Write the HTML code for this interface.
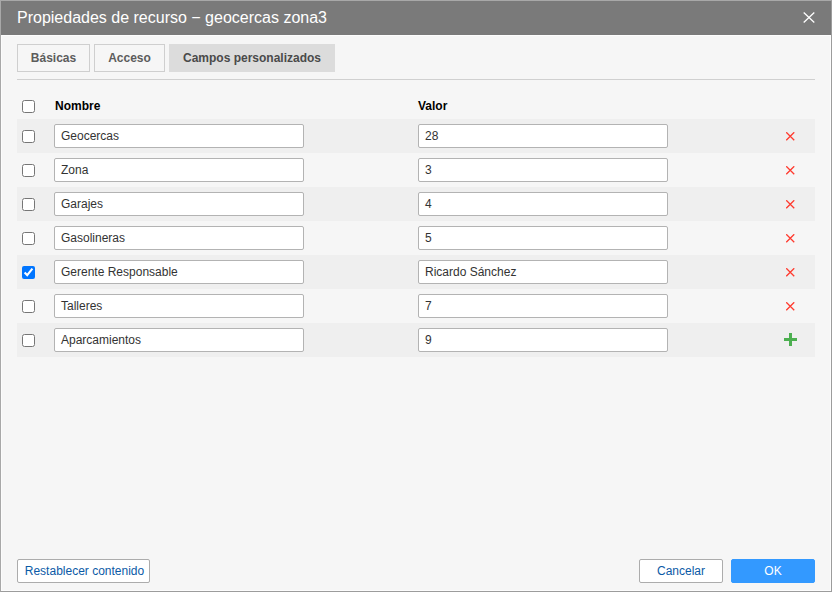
<!DOCTYPE html>
<html><head><meta charset="utf-8">
<style>
*{box-sizing:border-box;margin:0;padding:0}
html,body{width:832px;height:592px;overflow:hidden;background:#f6f6f6}
body{font-family:"Liberation Sans",sans-serif;font-size:12px;color:#333;position:relative}
.a{position:absolute}
#frame{left:0;top:0;width:832px;height:592px;border-top:1px solid #a8a8a8;border-left:1px solid #a8a8a8;border-right:1px solid #9c9c9c;border-bottom:1px solid #9c9c9c}
#hl{left:1px;top:35px;width:830px;height:556px;border:1px solid #fcfcfc;border-top:1px solid #fdfdfd}
#title{left:1px;top:1px;width:830px;height:34px;background:#7a7a7a}
#ttext{left:17px;top:9px;font-size:16px;line-height:18px;color:#fff;white-space:nowrap}
#close{left:803px;top:12px;width:12px;height:11px}
.tab{top:44px;height:28px;border:1px solid #cfcfcf;background:#f6f6f6;font-weight:bold;color:#5c5c5c;text-align:center;line-height:26px;white-space:nowrap}
.tab.act{background:#dcdcdc;border-color:#dcdcdc;color:#4a4a4a}
#sep{left:17px;top:79px;width:798px;height:1px;background:#d0d0d0}
.hd{top:99px;font-weight:bold;color:#000;line-height:14px}
.band{left:17px;width:798px;height:34px;background:#efefef}
.inp{height:24px;width:250px;background:#fff;border:1px solid #b3b3b3;border-radius:2px;padding-left:6px;line-height:22px;white-space:nowrap;color:#333}
.cb{width:13px;height:13px;margin:0}
.x{left:786px;width:9px;height:9px}
.btn{top:559px;height:24px;border:1px solid #acacac;border-radius:2px;background:#fff;color:#0b5aa6;text-align:center;line-height:22px;white-space:nowrap}
.ok{background:#3399ff;border-color:#3399ff;color:#fff}
</style></head><body>
<div id="frame" class="a"></div>
<div id="title" class="a"></div>
<div id="hl" class="a"></div>
<div id="ttext" class="a">Propiedades de recurso − geocercas zona3</div>
<svg id="close" class="a" viewBox="0 0 12 11"><path d="M0.7 0.6L11.3 10.4M11.3 0.6L0.7 10.4" stroke="#fff" stroke-width="1.3"/></svg>

<div class="a tab" style="left:17px;width:73px">Básicas</div>
<div class="a tab" style="left:94px;width:71px">Acceso</div>
<div class="a tab act" style="left:169px;width:166px">Campos personalizados</div>
<div id="sep" class="a"></div>

<input type="checkbox" class="a cb" style="left:22px;top:100px">
<div class="a hd" style="left:55px">Nombre</div>
<div class="a hd" style="left:418px">Valor</div>

<div class="a band" style="top:119px"></div>
<div class="a band" style="top:187px"></div>
<div class="a band" style="top:255px"></div>
<div class="a band" style="top:323px"></div>

<input type="checkbox" class="a cb" style="left:22px;top:130px">
<div class="a inp" style="left:54px;top:124px">Geocercas</div>
<div class="a inp" style="left:418px;top:124px">28</div>
<svg class="a x" style="top:132px" viewBox="0 0 9 9"><path d="M0.25 0.25L8.25 8.25M8.25 0.25L0.25 8.25" stroke="#ff3a2e" stroke-width="1.3"/></svg>

<input type="checkbox" class="a cb" style="left:22px;top:164px">
<div class="a inp" style="left:54px;top:158px">Zona</div>
<div class="a inp" style="left:418px;top:158px">3</div>
<svg class="a x" style="top:166px" viewBox="0 0 9 9"><path d="M0.25 0.25L8.25 8.25M8.25 0.25L0.25 8.25" stroke="#ff3a2e" stroke-width="1.3"/></svg>

<input type="checkbox" class="a cb" style="left:22px;top:198px">
<div class="a inp" style="left:54px;top:192px">Garajes</div>
<div class="a inp" style="left:418px;top:192px">4</div>
<svg class="a x" style="top:200px" viewBox="0 0 9 9"><path d="M0.25 0.25L8.25 8.25M8.25 0.25L0.25 8.25" stroke="#ff3a2e" stroke-width="1.3"/></svg>

<input type="checkbox" class="a cb" style="left:22px;top:232px">
<div class="a inp" style="left:54px;top:226px">Gasolineras</div>
<div class="a inp" style="left:418px;top:226px">5</div>
<svg class="a x" style="top:234px" viewBox="0 0 9 9"><path d="M0.25 0.25L8.25 8.25M8.25 0.25L0.25 8.25" stroke="#ff3a2e" stroke-width="1.3"/></svg>

<input type="checkbox" class="a cb" style="left:22px;top:266px" checked>
<div class="a inp" style="left:54px;top:260px">Gerente Responsable</div>
<div class="a inp" style="left:418px;top:260px">Ricardo Sánchez</div>
<svg class="a x" style="top:268px" viewBox="0 0 9 9"><path d="M0.25 0.25L8.25 8.25M8.25 0.25L0.25 8.25" stroke="#ff3a2e" stroke-width="1.3"/></svg>

<input type="checkbox" class="a cb" style="left:22px;top:300px">
<div class="a inp" style="left:54px;top:294px">Talleres</div>
<div class="a inp" style="left:418px;top:294px">7</div>
<svg class="a x" style="top:302px" viewBox="0 0 9 9"><path d="M0.25 0.25L8.25 8.25M8.25 0.25L0.25 8.25" stroke="#ff3a2e" stroke-width="1.3"/></svg>

<input type="checkbox" class="a cb" style="left:22px;top:334px">
<div class="a inp" style="left:54px;top:328px">Aparcamientos</div>
<div class="a inp" style="left:418px;top:328px">9</div>
<svg class="a" style="left:784px;top:333px;width:13px;height:13px" viewBox="0 0 13 13"><path d="M6.5 0V13M0 6.5H13" stroke="#4caf50" stroke-width="3"/></svg>

<div class="a btn" style="left:17px;width:133px;padding-left:2px">Restablecer contenido</div>
<div class="a btn" style="left:639px;width:84px">Cancelar</div>
<div class="a btn ok" style="left:731px;width:84px">OK</div>
</body></html>
